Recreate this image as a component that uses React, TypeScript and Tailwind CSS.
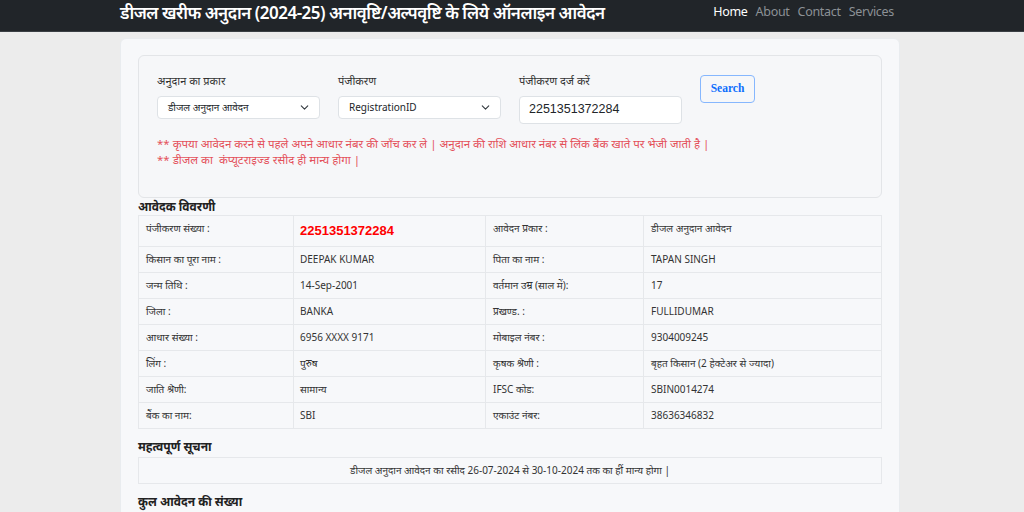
import React from 'react';
import { ChevronDown } from 'lucide-react';

const hindi = { fontFamily: '"Noto Sans", "Noto Sans Devanagari", "Liberation Sans", sans-serif' };

const rows: [string, React.ReactNode, string, string][] = [
  ['किसान का पूरा नाम :', 'DEEPAK KUMAR', 'पिता का नाम :', 'TAPAN SINGH'],
  ['जन्म तिथि :', '14-Sep-2001', 'वर्तमान उम्र (साल में):', '17'],
  ['जिला :', 'BANKA', 'प्रखण्ड. :', 'FULLIDUMAR'],
  ['आधार संख्या :', '6956 XXXX 9171', 'मोबाइल नंबर :', '9304009245'],
  ['लिंग :', 'पुरुष', 'कृषक श्रेणी :', 'बृहत किसान (2 हेक्टेअर से ज्यादा)'],
  ['जाति श्रेणी:', 'सामान्य', 'IFSC कोड:', 'SBIN0014274'],
  ['बैंक का नाम:', 'SBI', 'एकाउंट नंबर:', '38636346832'],
];

const Select = ({ value }: { value: string }) => (
  <div className="flex h-[23px] w-[163px] items-center justify-between rounded border border-[#dee2e6] bg-white pl-[10px] pr-[8px] text-[10px] text-[#212529]">
    <span>{value}</span>
    <ChevronDown size={13} strokeWidth={2} className="text-[#343a40]" />
  </div>
);

export default function App() {
  return (
    <div className="min-h-screen bg-[#ececec] text-[#212529]" style={hindi}>
      <header className="flex h-[32px] items-center border-b border-[#3a3f44] bg-[#212529] pb-[6px]">
        <h1 className="ml-[120px] text-[17px] font-semibold tracking-[-0.5px] text-white">
          डीजल खरीफ अनुदान (2024-25) अनावृष्टि/अल्पवृष्टि के लिये ऑनलाइन आवेदन
        </h1>
        <nav className="ml-auto mr-[130px] flex gap-[8px] text-[12.5px] tracking-[-0.3px]">
          <span className="text-white">Home</span>
          <span className="text-[#8c9196]">About</span>
          <span className="text-[#8c9196]">Contact</span>
          <span className="text-[#8c9196]">Services</span>
        </nav>
      </header>

      <main className="ml-[120px] mr-[124px] mt-[6px] rounded-md border border-[#e9ecef] bg-[#f7f8fa] px-[17px] pt-[16px] pb-6">
        <section className="h-[143px] rounded-md border border-[#e3e5e8] bg-[#f6f7f9] pl-[18px] pt-[17px]">
          <div className="flex gap-[18px]">
            <div>
              <label className="mb-[6px] block text-[11px] text-[#333]">अनुदान का प्रकार</label>
              <Select value="डीजल अनुदान आवेदन" />
            </div>
            <div>
              <label className="mb-[6px] block text-[11px] text-[#333]">पंजीकरण</label>
              <Select value="RegistrationID" />
            </div>
            <div>
              <label className="mb-[6px] block text-[11px] text-[#333]">पंजीकरण दर्ज करें</label>
              <div className="flex h-[28px] w-[163px] items-center rounded border border-[#dee2e6] bg-white pl-[9px] text-[12.5px] text-[#212529]" style={{ fontFamily: '"Liberation Sans", sans-serif' }}>
                2251351372284
              </div>
            </div>
            <button className="mt-[2px] h-[28px] w-[55px] rounded border border-[#86b7fe] text-[11.5px] font-bold text-[#0d6efd]" style={{ fontFamily: '"Liberation Serif", serif' }}>
              Search
            </button>
          </div>
          <div className="mt-[12px] text-[11.5px] leading-[16px] text-[#e4515b]">
            <p>** कृपया आवेदन करने से पहले अपने आधार नंबर की जाँच कर ले | अनुदान की राशि आधार नंबर से लिंक बैंक खाते पर भेजी जाती है |</p>
            <p>** डीजल का&nbsp; कंप्यूटराइज्ड रसीद ही मान्य होगा |</p>
          </div>
        </section>

        <h2 className="mt-[1px] text-[12px] font-bold leading-[16px] text-[#222]">आवेदक विवरणी</h2>
        <table className="w-full border-collapse text-[10px] text-[#333]">
          <colgroup>
            <col className="w-[155px]" />
            <col className="w-[192px]" />
            <col className="w-[158px]" />
            <col />
          </colgroup>
          <tbody>
            <tr className="h-[31px]">
              <td className="border border-[#e6e8eb] px-[7px] pt-[5px] align-top">पंजीकरण संख्या :</td>
              <td className="border border-[#e6e8eb] px-[6px] text-[13px] font-bold text-[#ff0000]" style={{ fontFamily: '"Liberation Sans", sans-serif' }}>2251351372284</td>
              <td className="border border-[#e6e8eb] px-[7px] pt-[5px] align-top">आवेदन प्रकार :</td>
              <td className="border border-[#e6e8eb] px-[7px] pt-[5px] align-top">डीजल अनुदान आवेदन</td>
            </tr>
            {rows.map((r, i) => (
              <tr key={i} className="h-[26px]">
                <td className="border border-[#e6e8eb] px-[7px]">{r[0]}</td>
                <td className="border border-[#e6e8eb] px-[6px]">{r[1]}</td>
                <td className="border border-[#e6e8eb] px-[7px]">{r[2]}</td>
                <td className="border border-[#e6e8eb] px-[7px]">{r[3]}</td>
              </tr>
            ))}
          </tbody>
        </table>

        <h2 className="mt-[10px] text-[12px] font-bold leading-[16px] text-[#222]">महत्वपूर्ण सूचना</h2>
        <div className="mt-[2px] flex h-[27px] items-center justify-center border border-[#e6e8eb] text-[10px] text-[#333]">
          डीजल अनुदान आवेदन का रसीद 26-07-2024 से 30-10-2024 तक का हीं मान्य होगा |
        </div>

        <h2 className="mt-[10px] text-[12px] font-bold leading-[16px] text-[#222]">कुल आवेदन की संख्या</h2>
        <p className="mt-[6px] text-center text-[12px] font-bold text-[#0d6efd]">
          डीजल अनुदान हेतु अब तक कुल प्राप्त आवेदनों की संख्या
        </p>
      </main>
    </div>
  );
}
